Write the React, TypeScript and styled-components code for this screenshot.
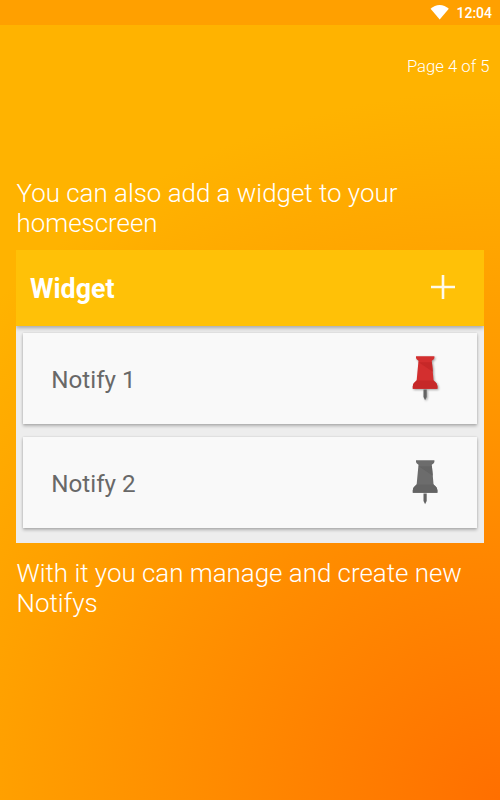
import React from "react";
import styled, { createGlobalStyle } from "styled-components";

const GlobalStyle = createGlobalStyle`
  * { box-sizing: border-box; }
  body { margin: 0; font-family: Roboto, sans-serif; }
`;

const Screen = styled.main`
  display: flex;
  flex-direction: column;
  width: 500px;
  height: 800px;
  overflow: hidden;
  color: #fff;
  background: radial-gradient(circle at 100% 100%, #ff6f00 0, #ffa000 500px, #ffb300 710px);
`;

const StatusBar = styled.header`
  display: flex;
  align-items: center;
  justify-content: flex-end;
  gap: 7px;
  height: 25px;
  flex: none;
  padding-right: 8px;
  background: #ffa000;
`;

const Clock = styled.time`
  font-size: 14px;
  font-weight: 500;
  line-height: 25px;
  padding-top: 1px;
`;

const PageCount = styled.div`
  height: 152px;
  flex: none;
  padding: 32px 10.5px 0 0;
  text-align: right;
  font-size: 16.700px;
  font-weight: 300;
  line-height: 20px;
`;

const Message = styled.p`
  margin: 0;
  padding: 1px 16.500px 0;
  font-size: 25.900px;
  font-weight: 300;
  line-height: 30px;
`;

const Widget = styled.section`
  display: flex;
  flex-direction: column;
  height: 293px;
  flex: none;
  margin: 12px 16px 14px;
  background: #ededed;
`;

const WidgetHeader = styled.div`
  display: flex;
  align-items: center;
  justify-content: space-between;
  height: 76px;
  flex: none;
  padding: 0 29px 0 14px;
  background: #ffc107;
  box-shadow: 0 2px 4px rgba(0, 0, 0, 0.3);
  clip-path: inset(0 0 -8px 0);
`;

const WidgetTitle = styled.h1`
  margin: 2px 0 0;
  font-size: 26.800px;
  font-weight: 700;
  line-height: 30px;
`;

const PlusIcon = styled.svg`
  display: block;
  margin-bottom: 2px;
`;

const List = styled.div`
  display: flex;
  flex-direction: column;
  gap: 13px;
  padding: 7px 7px 0;
`;

const Card = styled.article`
  display: flex;
  align-items: center;
  justify-content: space-between;
  height: 91px;
  padding: 0 39.500px 0 28.300px;
  color: #686868;
  background: #f9f9f9;
  box-shadow: 0 2px 3px rgba(0, 0, 0, 0.25), 0 0 2px rgba(0, 0, 0, 0.12);
`;

const CardLabel = styled.span`
  margin-top: 2px;
  font-size: 24.200px;
  line-height: 28px;
`;

const Pin = styled.svg<{ $raised: boolean }>`
  display: block;
  filter: ${(p) => (p.$raised ? "drop-shadow(1px 1px 1px rgba(0, 0, 0, 0.35))" : "none")};
`;

function PinIcon({ active }: { active: boolean }) {
  const body = active ? "#d32f2f" : "#6c6c6c";
  const shade = active ? "#c62828" : "#646464";
  return (
    <Pin $raised={active} width="26" height="45" viewBox="0 0 26 45">
      <path d="M11.500 33.500h3.200v7.500l-1.600 3.200-1.600-3.200z" fill="#636363" />
      <path d="M4 .3h18.400v1.700q0 1.200-2.600 2.800L21.500 24q.2 1 1.600 1.800 2.300 1.700 2.300 4.400v2.500H.8v-2.500q0-2.700 2.300-4.400 1.400-.8 1.600-1.800L6.500 4.800Q4 3.200 4 2z" fill={body} />
      <path d="M6.500 6.200h13.400l.9 9.500z" fill={shade} />
      <path d="M4.600 24.500h17q.4 .7 1.500 1.400 2.300 1.700 2.300 4.300v2.500H.8v-2.500q0-2.600 2.300-4.300 1.100-.7 1.500-1.400z" fill={shade} />
    </Pin>
  );
}

const notifications = [
  { label: "Notify 1", active: true },
  { label: "Notify 2", active: false },
];

export default function App() {
  return (
    <>
      <GlobalStyle />
      <Screen>
        <StatusBar>
          <svg width="19" height="17" viewBox="0 0 19 17">
            <path d="M.6 4.800C5.700 -.4 13.600 -.4 18.800 4.800L9.700 15.600z" fill="#fff" />
          </svg>
          <Clock>12:04</Clock>
        </StatusBar>
        <PageCount>Page 4 of 5</PageCount>
        <Message>You can also add a widget to your homescreen</Message>
        <Widget>
          <WidgetHeader>
            <WidgetTitle>Widget</WidgetTitle>
            <PlusIcon width="24" height="24" viewBox="0 0 24 24">
              <path d="M12 0v24M0 12h24" stroke="#fff" strokeOpacity=".92" strokeWidth="2.600" />
            </PlusIcon>
          </WidgetHeader>
          <List>
            {notifications.map((item) => (
              <Card key={item.label}>
                <CardLabel>{item.label}</CardLabel>
                <PinIcon active={item.active} />
              </Card>
            ))}
          </List>
        </Widget>
        <Message>With it you can manage and create new Notifys</Message>
      </Screen>
    </>
  );
}
